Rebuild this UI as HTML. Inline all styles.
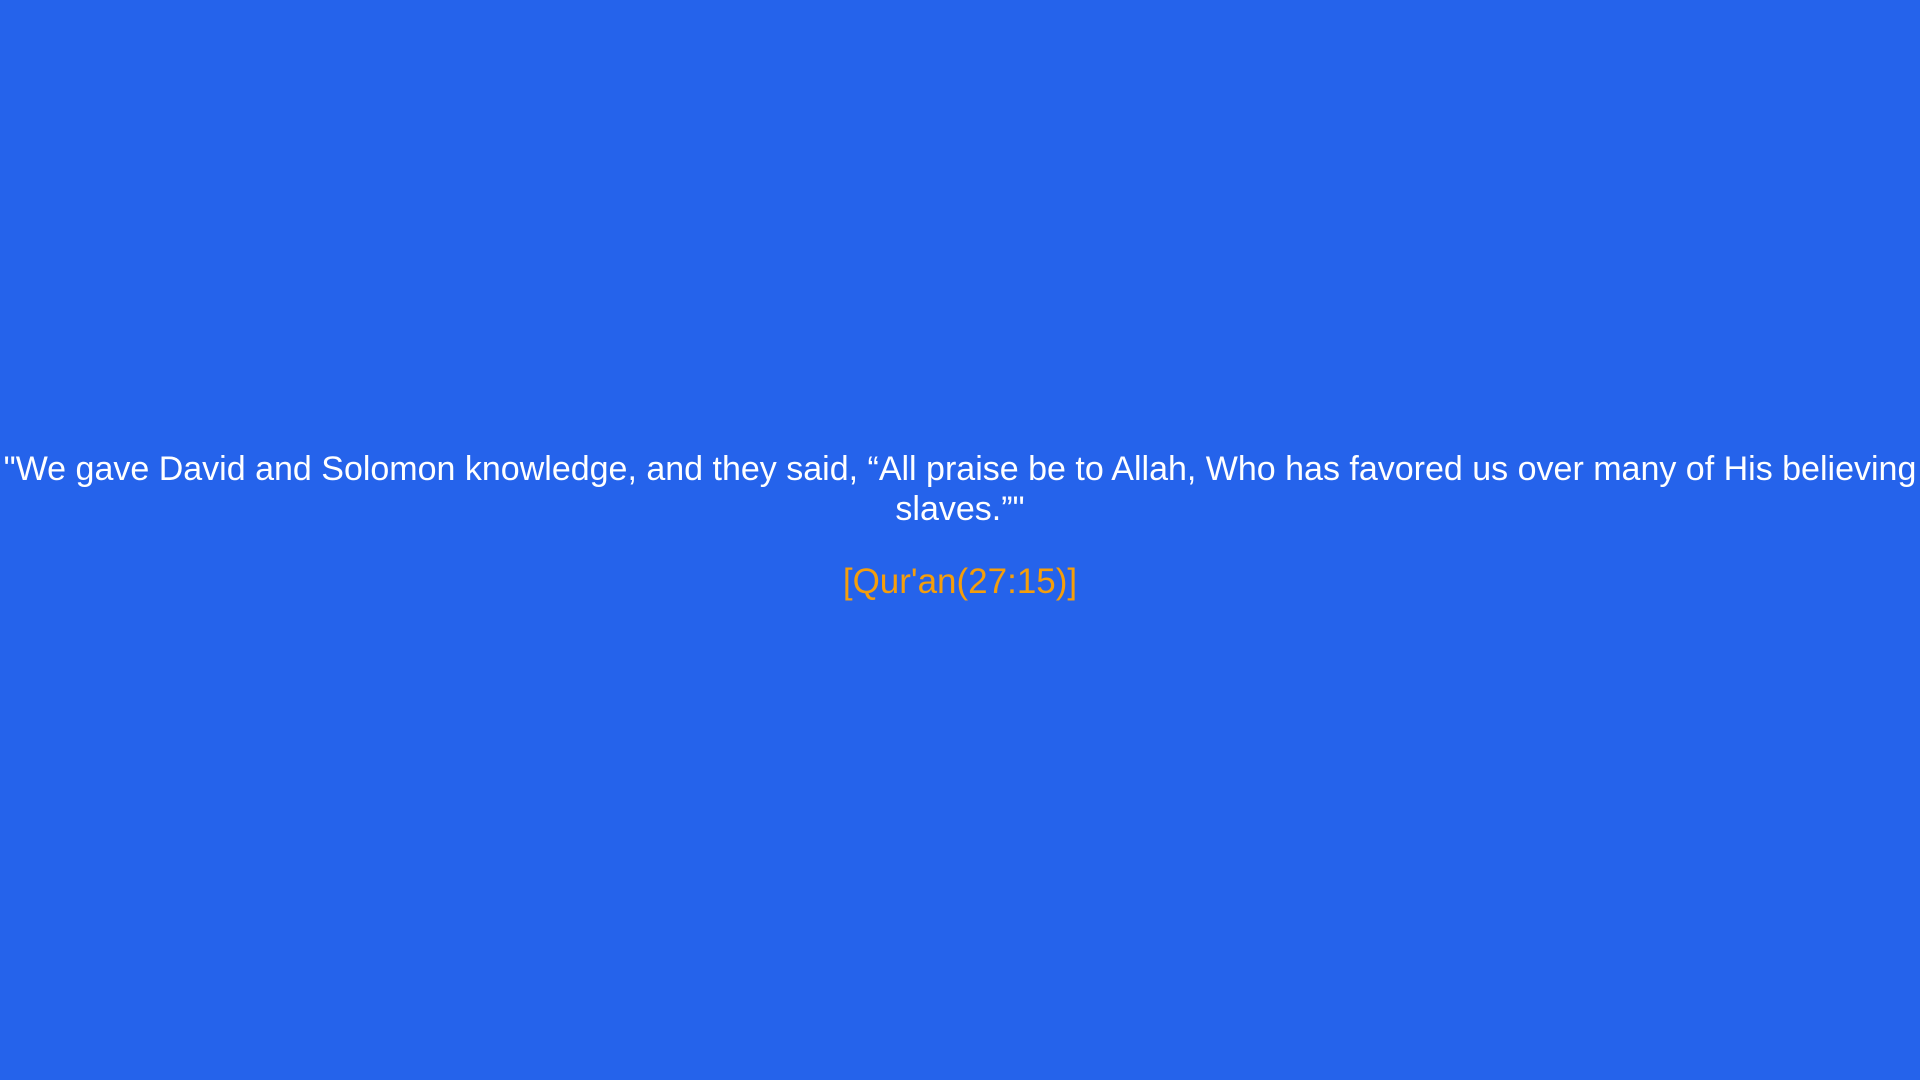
<!DOCTYPE html>
<html><head><meta charset="utf-8"><style>
html,body{margin:0;padding:0;width:1920px;height:1080px;background:#2563EB;overflow:hidden}
.q{position:absolute;left:0;width:1920px;top:449px;text-align:center;color:#fff;font-family:"Liberation Sans",sans-serif;font-size:34px;line-height:40px;white-space:nowrap}
.c{position:absolute;left:0;width:1920px;top:561px;text-align:center;color:#F59E0B;font-family:"Liberation Sans",sans-serif;font-size:35px;line-height:42px}
</style></head><body>
<div class="q">"We gave David and Solomon knowledge, and they said, “All praise be to Allah, Who has favored us over many of His believing<br>slaves.”"</div>
<div class="c">[Qur'an(27:15)]</div>
</body></html>
